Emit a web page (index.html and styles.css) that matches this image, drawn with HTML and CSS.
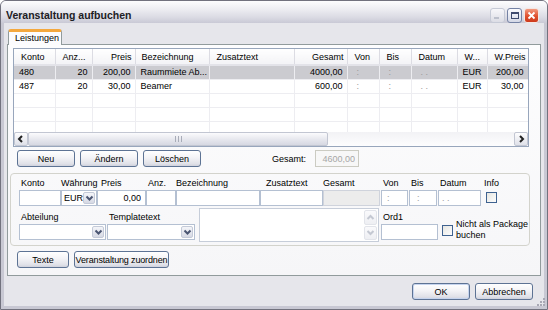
FILE: index.html
```html
<!DOCTYPE html>
<html>
<head>
<meta charset="utf-8">
<title>Veranstaltung aufbuchen</title>
<link rel="stylesheet" href="styles.css">
</head>
<body>
<div class="window">
  <div class="titlebar">
    <span class="title">Veranstaltung aufbuchen</span>
    <div class="caption">
      <div class="cap cap-min"><svg width="13" height="13"><rect x="3" y="8" width="5" height="2" fill="#bcc0cc"/></svg></div>
      <div class="cap cap-max"><svg width="13" height="13"><rect x="3.5" y="3.5" width="7" height="6" fill="none" stroke="#3e4a6e"/><rect x="3" y="3" width="8" height="2" fill="#3e4a6e"/></svg></div>
      <div class="cap cap-close"><svg width="13" height="13"><path d="M3.5 3.5 L9.5 9.5 M9.5 3.5 L3.5 9.5" stroke="#fff" stroke-width="1.8"/></svg></div>
    </div>
  </div>

  <div class="client">
    <div class="tabs"><div class="tab">Leistungen</div></div>

    <div class="panel">
      <div class="grid">
        <div class="grid-body">
          <table>
            <colgroup>
              <col style="width:41px"><col style="width:37px"><col style="width:43px"><col style="width:74px">
              <col style="width:85px"><col style="width:53px"><col style="width:32px"><col style="width:32px">
              <col style="width:46px"><col style="width:30px"><col style="width:41px">
            </colgroup>
            <thead>
              <tr>
                <th>Konto</th><th>Anz...</th><th class="num">Preis</th><th class="bez">Bezeichnung</th>
                <th>Zusatztext</th><th class="num">Gesamt</th><th>Von</th><th>Bis</th>
                <th>Datum</th><th>W...</th><th class="num">W.Preis</th>
              </tr>
            </thead>
            <tbody>
              <tr class="sel">
                <td>480</td><td class="num">20</td><td class="num">200,00</td><td>Raummiete Ab...</td>
                <td></td><td class="num">4000,00</td><td class="mask">:</td><td class="mask">:</td>
                <td class="mask">. .</td><td>EUR</td><td class="num">200,00</td>
              </tr>
              <tr>
                <td>487</td><td class="num">20</td><td class="num">30,00</td><td>Beamer</td>
                <td></td><td class="num">600,00</td><td class="mask">:</td><td class="mask">:</td>
                <td class="mask">. .</td><td>EUR</td><td class="num">30,00</td>
              </tr>
              <tr><td></td><td></td><td></td><td></td><td></td><td></td><td></td><td></td><td></td><td></td><td></td></tr>
              <tr><td></td><td></td><td></td><td></td><td></td><td></td><td></td><td></td><td></td><td></td><td></td></tr>
              <tr><td></td><td></td><td></td><td></td><td></td><td></td><td></td><td></td><td></td><td></td><td></td></tr>
            </tbody>
          </table>
        </div>
        <div class="hscroll">
          <div class="sb-btn"><svg width="12" height="12"><path d="M7 3 L4 6 L7 9" fill="none" stroke="#222" stroke-width="2"/></svg></div>
          <div class="sb-thumb"><svg width="7" height="6"><path d="M0.5 0 V6 M3.5 0 V6 M6.5 0 V6" stroke="#a8acb8"/></svg></div>
          <div class="sb-track"></div>
          <div class="sb-btn"><svg width="12" height="12"><path d="M5 3 L8 6 L5 9" fill="none" stroke="#222" stroke-width="2"/></svg></div>
        </div>
      </div>

      <div class="toolbar">
        <button class="btn">Neu</button>
        <button class="btn">Ändern</button>
        <button class="btn">Löschen</button>
        <span class="sum-label">Gesamt:</span>
        <input class="edit sum" type="text" value="4600,00" disabled>
      </div>

      <div class="group">
        <div class="fields">
          <div class="field w-konto"><label>Konto</label><input class="edit" type="text"></div>
          <div class="field w-wahr"><label class="flush">Währung</label>
            <div class="combo"><span>EUR</span><div class="drop"><svg width="11" height="11"><path d="M2.5 3.5 L5.5 6.5 L8.5 3.5" fill="none" stroke="#4a5572" stroke-width="2"/></svg></div></div>
          </div>
          <div class="field w-preis"><label class="ind">Preis</label><input class="edit r" type="text" value="0,00"></div>
          <div class="field w-anz"><label>Anz.</label><input class="edit" type="text"></div>
          <div class="field w-bez"><label class="flush">Bezeichnung</label><input class="edit" type="text"></div>
          <div class="field w-zus"><label class="ind2">Zusatztext</label><input class="edit" type="text"></div>
          <div class="field w-ges"><label class="flush">Gesamt</label><input class="edit off" type="text" disabled></div>
          <div class="field w-von"><label>Von</label><input class="edit mask-in" type="text" value=":"></div>
          <div class="field w-bis"><label>Bis</label><input class="edit mask-in" type="text" value=":"></div>
          <div class="field w-dat"><label>Datum</label><input class="edit mask-in dat" type="text" value=". ."></div>
          <div class="field w-info"><label class="flush">Info</label><span class="check info-check"></span></div>
        </div>

        <div class="row2">
          <div class="field w-abt"><label class="low">Abteilung</label>
            <div class="combo"><span></span><div class="drop"><svg width="11" height="11"><path d="M2.5 3.5 L5.5 6.5 L8.5 3.5" fill="none" stroke="#4a5572" stroke-width="2"/></svg></div></div>
          </div>
          <div class="field w-tpl"><label class="low">Templatetext</label>
            <div class="combo"><span></span><div class="drop"><svg width="11" height="11"><path d="M2.5 3.5 L5.5 6.5 L8.5 3.5" fill="none" stroke="#4a5572" stroke-width="2"/></svg></div></div>
          </div>
          <div class="memo">
            <div class="memo-bar">
              <div class="memo-btn"><svg width="11" height="11"><path d="M2.5 7 L5.5 4 L8.5 7" fill="none" stroke="#c4c8d2" stroke-width="2"/></svg></div>
              <div class="memo-btn"><svg width="11" height="11"><path d="M2.5 4 L5.5 7 L8.5 4" fill="none" stroke="#c4c8d2" stroke-width="2"/></svg></div>
            </div>
          </div>
          <div class="field w-ord"><label class="low">Ord1</label><input class="edit" type="text"></div>
          <div class="pkg"><span class="check"></span><span class="pkg-text">Nicht als Package<br>buchen</span></div>
        </div>
      </div>

      <div class="toolbar bottom">
        <button class="btn w-texte">Texte</button>
        <button class="btn w-zuord">Veranstaltung zuordnen</button>
      </div>
    </div>

    <div class="dialog-btns">
      <button class="btn default">OK</button>
      <button class="btn">Abbrechen</button>
    </div>
  </div>

  <div class="grip"><svg width="11" height="11">
    <rect x="8" y="2" width="2" height="2" fill="#a8a8b4"/>
    <rect x="5" y="5" width="2" height="2" fill="#a8a8b4"/><rect x="8" y="5" width="2" height="2" fill="#a8a8b4"/>
    <rect x="2" y="8" width="2" height="2" fill="#a8a8b4"/><rect x="5" y="8" width="2" height="2" fill="#a8a8b4"/><rect x="8" y="8" width="2" height="2" fill="#a8a8b4"/>
  </svg></div>
</div>
</body>
</html>
```

FILE: styles.css
```css
* {
  box-sizing: border-box;
}

body {
  margin: 0;
  background: #fff;
  font: 9px "Liberation Sans", Arial, sans-serif;
  color: #000;
}

.window {
  position: relative;
  width: 548px;
  height: 310px;
  display: flex;
  flex-direction: column;
  background: #c8c8d3;
  border: 1px solid #72727e;
  border-radius: 6px 6px 0 0;
  overflow: hidden;
}

/* title bar */
.titlebar {
  height: 22px;
  flex: none;
  display: flex;
  align-items: flex-end;
  padding: 0 8px 2px 5px;
  background: linear-gradient(#fdfdfe, #ececf1 40%, #dadae3 75%, #c9c9d5);
}

.title {
  flex: 1;
  font: bold 10.5px "Liberation Sans", Arial, sans-serif;
  line-height: 12px;
  color: #202024;
}

.caption {
  display: flex;
  gap: 2px;
  margin-bottom: -2px;
}

.cap {
  width: 15px;
  height: 15px;
  border-radius: 3px;
  display: flex;
  align-items: center;
  justify-content: center;
}

.cap-min {
  border: 1px solid #c6cad6;
  background: linear-gradient(#f7f7fa, #dcdde5);
}

.cap-max {
  border: 1px solid #7482a4;
  background: linear-gradient(#fbfbfe, #d4d8e6);
}

.cap-close {
  border: 1px solid #f4e6e2;
  background: linear-gradient(#f29a80, #e0502e 55%, #cc3a1c);
}

/* client */
.client {
  flex: 1;
  margin: 0 3px 3px;
  padding-top: 6px;
  background: #e6e6eb;
  display: flex;
  flex-direction: column;
}

.tabs {
  display: flex;
  height: 16px;
  padding-left: 4px;
  margin-bottom: -1px;
  position: relative;
  z-index: 1;
}

.tab {
  width: 54px;
  padding-left: 6px;
  line-height: 13px;
  background: #fcfcfe;
  border: 1px solid #919b9c;
  border-top: 3px solid #f4a83e;
  border-bottom: none;
  border-radius: 3px 3px 0 0;
}

.panel {
  margin-left: 3px;
  width: 534px;
  height: 232px;
  flex: none;
  padding-top: 3px;
  border: 1px solid #919b9c;
  background: linear-gradient(#fdfdfe, #f6f6f8);
  display: flex;
  flex-direction: column;
}

/* list */
.grid {
  margin-left: 5px;
  width: 516px;
  height: 99px;
  flex: none;
  border: 1px solid #98a6bc;
  background: #fff;
  display: flex;
  flex-direction: column;
}

.grid-body {
  flex: 1;
  overflow: hidden;
}

table {
  width: 514px;
  border-collapse: collapse;
  table-layout: fixed;
}

th {
  height: 16px;
  padding: 0 3px 0 7px;
  font-weight: normal;
  text-align: left;
  white-space: nowrap;
  overflow: hidden;
  background: linear-gradient(#ffffff, #f3f3f6);
  border-right: 1px solid #dcdce3;
  border-bottom: 2px solid #e3e3e9;
}

th.bez {
  padding-left: 6px;
}

td {
  height: 14px;
  padding: 0 5px;
  white-space: nowrap;
  overflow: hidden;
  border-right: 1px solid #ededf1;
  border-bottom: 1px solid #ededf1;
}

th.num,
td.num {
  text-align: right;
}

td.num {
  padding-right: 4px;
}

td.mask {
  padding-left: 9px;
  color: #9a9a9a;
}

tr.sel td {
  background: #cbcbd0;
}

.hscroll {
  height: 14px;
  flex: none;
  display: flex;
  background: linear-gradient(#f2f2f5, #fdfdfe);
}

.sb-btn {
  width: 14px;
  height: 14px;
  border: 1px solid #c2c6d2;
  border-radius: 2px;
  background: linear-gradient(#fdfdfe, #dfe1e9);
  display: flex;
  align-items: center;
  justify-content: center;
}

.sb-thumb {
  width: 300px;
  border: 1px solid #c2c6d2;
  border-radius: 2px;
  background: linear-gradient(#fbfbfd, #e4e5ec 60%, #d6d8e2);
  display: flex;
  align-items: center;
  justify-content: center;
}

.sb-track {
  flex: 1;
}

/* buttons */
.toolbar {
  display: flex;
  align-items: center;
  margin-top: 3px;
  padding-left: 9px;
}

.btn {
  width: 58px;
  height: 17px;
  padding: 0;
  font: 9px "Liberation Sans", Arial, sans-serif;
  color: #000;
  white-space: nowrap;
  border: 1px solid #5d7394;
  border-radius: 3px;
  background: linear-gradient(#ffffff, #f3f3f6 45%, #e0e1e8 85%, #cfd1dc);
}

.btn + .btn {
  margin-left: 5px;
}

.sum-label {
  margin-left: 71px;
  width: 43px;
}

.edit {
  height: 16px;
  margin: 0;
  padding: 0 3px;
  font: 9px "Liberation Sans", Arial, sans-serif;
  color: #000;
  border: 1px solid #b4c0d2;
  background: #fff;
  outline: none;
}

.edit.sum {
  width: 44px;
  height: 17px;
  text-align: right;
  color: #a6a6a6;
  border-color: #cbcbc2;
  background: #f7f7f7;
}

.edit.r {
  text-align: right;
  padding-right: 4px;
}

.edit.off {
  background: #ececec;
  border-color: #cfd3dc;
}

.mask-in {
  color: #9a9a9a;
  padding-left: 5px;
}

.w-bis .mask-in {
  padding-left: 7px;
}

.mask-in.dat {
  padding-left: 3px;
}

/* group box */
.group {
  margin: 6px 0 0 2px;
  width: 520px;
  height: 73px;
  flex: none;
  padding: 3px 0 0 8px;
  border: 1px solid #d3d3cc;
  border-radius: 4px;
}

.fields,
.row2 {
  display: flex;
}

.field {
  display: flex;
  flex-direction: column;
  flex: none;
}

.field label {
  line-height: 12px;
  height: 13px;
  padding-left: 2px;
  white-space: nowrap;
}

.field label.flush {
  padding-left: 0;
}

.field label.ind {
  padding-left: 4px;
}

.field label.ind2 {
  padding-left: 6px;
}

.field .edit {
  width: 100%;
}

.w-konto { width: 42px; }
.w-wahr { width: 36px; }
.w-preis { width: 49px; }
.w-anz { width: 30px; }
.w-bez { width: 84px; }
.w-zus { width: 63px; }
.w-ges { width: 57px; }
.w-von { width: 27px; margin-left: 1px; }
.w-bis { width: 28px; margin-left: 1px; }
.w-dat { width: 43px; margin-left: 1px; }
.w-info { margin-left: 3px; }

.combo {
  height: 16px;
  display: flex;
  align-items: center;
  padding: 0 1px 0 2px;
  border: 1px solid #b4c0d2;
  background: #fff;
}

.combo span {
  flex: 1;
  white-space: nowrap;
}

.drop {
  width: 12px;
  height: 12px;
  flex: none;
  border: 1px solid #c4cad8;
  border-radius: 2px;
  background: linear-gradient(#f4f5f9, #d6d9e4);
  display: flex;
  align-items: center;
  justify-content: center;
}

.check {
  width: 11px;
  height: 11px;
  flex: none;
  border: 1px solid #3f6290;
  background: linear-gradient(135deg, #e6e6e2, #fdfdfd);
}

.info-check {
  margin: 2px 0 0 2px;
}

.row2 {
  margin-top: 2px;
}

.field label.low {
  height: 16px;
  padding-top: 3px;
}

.w-abt { width: 87px; }
.w-tpl { width: 88px; margin-left: 1px; }
.w-ord { width: 57px; margin-left: 2px; }

.memo {
  width: 180px;
  height: 34px;
  flex: none;
  margin-left: 4px;
  border: 1px solid #c6cdd9;
  background: #fff;
  display: flex;
  justify-content: flex-end;
}

.memo-bar {
  width: 15px;
  display: flex;
  flex-direction: column;
  gap: 1px;
  padding: 1px;
}

.memo-btn {
  flex: 1;
  border: 1px solid #e2e4ea;
  border-radius: 2px;
  background: linear-gradient(#fafafc, #eeeff3);
  display: flex;
  align-items: center;
  justify-content: center;
}

.pkg {
  display: flex;
  align-items: center;
  gap: 3px;
  margin: 10px 0 0 4px;
  line-height: 11px;
  flex: none;
}

.pkg-text {
  white-space: nowrap;
  font-size: 9px;
}

.toolbar.bottom {
  margin-top: 5px;
}

.btn.w-texte {
  width: 52px;
}

.btn.w-zuord {
  width: 95px;
  letter-spacing: -0.15px;
}

.dialog-btns {
  display: flex;
  justify-content: flex-end;
  padding-right: 11px;
  margin-top: 7px;
}

.btn.default {
  box-shadow: inset 0 0 0 1px #c6d4ee;
}

.grip {
  position: absolute;
  right: 1px;
  bottom: 2px;
  width: 11px;
  height: 11px;
}
```
